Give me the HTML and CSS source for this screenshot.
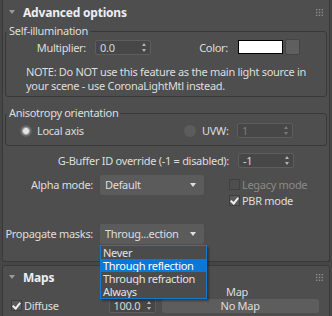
FILE: index.html
```html
<!DOCTYPE html>
<html lang="en">
<head>
  <meta charset="UTF-8">
  <title>Advanced options</title>
  <link rel="stylesheet" href="styles.css">
</head>
<body>
  <div class="screen">

    <!-- Advanced options rollout -->
    <div class="rollout adv">
      <div class="roll-head">
        <span class="tri"></span>
        <span class="roll-title">Advanced options</span>
        <svg class="grip" width="7" height="7" viewBox="0 0 7 7">
          <g fill="#8c8c8c">
            <rect x="0" y="0" width="1.4" height="1.4"/><rect x="2.8" y="0" width="1.4" height="1.4"/><rect x="5.6" y="0" width="1.4" height="1.4"/>
            <rect x="0" y="2.8" width="1.4" height="1.4"/><rect x="2.8" y="2.8" width="1.4" height="1.4"/><rect x="5.6" y="2.8" width="1.4" height="1.4"/>
            <rect x="0" y="5.6" width="1.4" height="1.4"/><rect x="2.8" y="5.6" width="1.4" height="1.4"/><rect x="5.6" y="5.6" width="1.4" height="1.4"/>
          </g>
        </svg>
      </div>

      <fieldset class="group">
        <legend>Self-illumination</legend>
        <div class="row mult-row">
          <span class="lbl lbl-mult">Multiplier:</span>
          <div class="spin w56"><span class="val">0.0</span><span class="arrows"></span></div>
          <span class="lbl lbl-color">Color:</span>
          <div class="swatch"></div>
          <div class="sw-btn"></div>
        </div>
        <p class="note">NOTE: Do NOT use this feature as the main light source in<br>your scene - use CoronaLightMtl instead.</p>
      </fieldset>

      <fieldset class="group aniso">
        <legend>Anisotropy orientation</legend>
        <div class="row aniso-row">
          <span class="radio on"></span>
          <span class="lbl radio-lbl">Local axis</span>
          <span class="radio off"></span>
          <span class="lbl lbl-uvw">UVW:</span>
          <div class="spin w56 disabled"><span class="val">1</span><span class="arrows"></span></div>
        </div>
      </fieldset>

      <div class="row gbuf-row">
        <span class="lbl lbl-gbuf">G-Buffer ID override (-1 = disabled):</span>
        <div class="spin w56"><span class="val">-1</span><span class="arrows"></span></div>
      </div>

      <div class="row alpha-row">
        <span class="lbl lbl-left">Alpha mode:</span>
        <div class="combo">Default<span class="combo-arrow"></span></div>
        <div class="checks">
          <div class="check disabled"><span class="box"></span>Legacy mode</div>
          <div class="check"><span class="box checked"></span>PBR mode</div>
        </div>
      </div>

      <div class="row prop-row">
        <span class="lbl lbl-left">Propagate masks:</span>
        <div class="combo">Throug...ection<span class="combo-arrow"></span></div>
      </div>

      <ul class="droplist">
        <li>Never</li>
        <li class="sel">Through reflection</li>
        <li>Through refraction</li>
        <li>Always</li>
      </ul>
    </div>

    <!-- Maps rollout -->
    <div class="rollout maps">
      <div class="roll-head short">
        <span class="tri"></span>
        <span class="roll-title">Maps</span>
        <svg class="grip" width="7" height="7" viewBox="0 0 7 7">
          <g fill="#8c8c8c">
            <rect x="0" y="0" width="1.4" height="1.4"/><rect x="2.8" y="0" width="1.4" height="1.4"/><rect x="5.6" y="0" width="1.4" height="1.4"/>
            <rect x="0" y="2.8" width="1.4" height="1.4"/><rect x="2.8" y="2.8" width="1.4" height="1.4"/><rect x="5.6" y="2.8" width="1.4" height="1.4"/>
            <rect x="0" y="5.6" width="1.4" height="1.4"/><rect x="2.8" y="5.6" width="1.4" height="1.4"/><rect x="5.6" y="5.6" width="1.4" height="1.4"/>
          </g>
        </svg>
      </div>
      <div class="map-head">Map</div>
      <div class="row map-row">
        <div class="check"><span class="box checked"></span>Diffuse</div>
        <div class="spin w47"><span class="val">100.0</span><span class="arrows"></span></div>
        <div class="map-btn">No Map</div>
      </div>
    </div>

  </div>
</body>
</html>
```

FILE: styles.css
```css
body {
  margin: 0;
  background: #464646;
  font-family: "Noto Sans", sans-serif;
  font-size: 11px;
  letter-spacing: -0.3px;
  color: #dedede;
}

.screen {
  width: 332px;
  height: 316px;
  overflow: hidden;
  position: relative;
}

.rollout {
  margin: 0 2px 0 2px;
  background: #4e4e4e;
  border: 1px solid #393939;
  border-radius: 3px;
}

.rollout.adv {
  border-top: none;
  border-radius: 0 0 3px 3px;
  height: 262px;
  box-sizing: border-box;
  position: relative;
}

.rollout.maps {
  margin-top: 3px;
  height: 60px;
}

.roll-head {
  height: 24px;
  display: flex;
  align-items: center;
  padding-left: 6px;
}

.roll-head.short {
  height: 22px;
}

.tri {
  width: 0;
  height: 0;
  border-left: 3px solid transparent;
  border-right: 3px solid transparent;
  border-top: 4px solid #9a9a9a;
  margin-right: 8px;
}

.roll-title {
  font-weight: bold;
  font-size: 12px;
  letter-spacing: -0.2px;
  color: #eceef6;
}

.grip {
  margin-left: auto;
  margin-right: 6px;
}

/* group boxes */
.group {
  margin: 0 2px;
  padding: 0 0 3px;
  border: 1px solid #383838;
  border-radius: 3px;
  min-width: 0;
}

.group legend {
  padding: 0 2px;
  margin-left: 1px;
  line-height: 14px;
}

.group.aniso {
  margin-top: 9px;
  padding-bottom: 7px;
}

.row {
  display: flex;
  align-items: center;
}

.lbl {
  white-space: nowrap;
}

.mult-row {
  margin-top: 1px;
  height: 16px;
}

.lbl-mult {
  width: 80px;
  text-align: right;
  margin-right: 9px;
}

.lbl-color {
  width: 77px;
  text-align: right;
  margin-right: 10px;
}

.swatch {
  width: 43px;
  height: 12px;
  background: #fff;
  border: 1px solid #000;
}

.sw-btn {
  width: 13px;
  height: 14px;
  margin-left: 2px;
  background: #5f5f5f;
  border: 1px solid #444;
  border-radius: 2px;
}

.note {
  margin: 10px 0 0 20px;
  line-height: 14px;
  white-space: nowrap;
}

/* spinners */
.spin {
  height: 15px;
  box-sizing: border-box;
  background: #474747;
  border: 1px solid #5d5d5d;
  border-radius: 2px;
  display: flex;
  align-items: center;
  padding-left: 4px;
  position: relative;
}

.w56 { width: 56px; }
.w47 { width: 47px; }

.spin .val {
  color: #d8d8d8;
}

.spin .arrows {
  position: absolute;
  right: 3px;
  top: 2px;
  width: 5px;
  height: 9px;
}

.spin .arrows::before,
.spin .arrows::after {
  content: "";
  position: absolute;
  left: 0;
  border-left: 2.5px solid transparent;
  border-right: 2.5px solid transparent;
}

.spin .arrows::before {
  top: 0;
  border-bottom: 3px solid #b4b4b4;
}

.spin .arrows::after {
  bottom: 0;
  border-top: 3px solid #b4b4b4;
}

.spin.disabled .val {
  color: #7c7c7c;
}

.spin.disabled .arrows::before { border-bottom-color: #7a7a7a; }
.spin.disabled .arrows::after { border-top-color: #7a7a7a; }

/* radios */
.aniso-row {
  margin-top: 3px;
  height: 15px;
}

.radio {
  width: 12px;
  height: 12px;
  flex: none;
  border-radius: 50%;
  background: #5c5c5c;
  box-sizing: border-box;
}

.radio.on {
  margin-left: 14px;
  background: radial-gradient(circle, #e4e4e4 0 2.5px, #bdbdbd 3px, #6a6a6a 4.5px, #5e5e5e 6px);
}

.radio.off {
  margin-left: 101px;
}

.radio-lbl {
  margin-left: 5px;
  width: 46px;
}

.lbl-uvw {
  margin-left: 6px;
  margin-right: 9px;
  width: 26px;
}

.gbuf-row {
  margin-top: 6px;
  height: 16px;
}

.lbl-gbuf {
  width: 226px;
  text-align: right;
  margin-right: 9px;
}

/* combos */
.alpha-row {
  margin-top: 7px;
  align-items: flex-start;
}

.lbl-left {
  width: 90px;
  text-align: right;
  margin-right: 7px;
  line-height: 20px;
}

.combo {
  width: 104px;
  height: 20px;
  box-sizing: border-box;
  background: #5b5b5b;
  border-radius: 2px;
  padding-left: 5px;
  line-height: 20px;
  position: relative;
}

.combo-arrow {
  position: absolute;
  right: 8px;
  top: 8px;
  border-left: 3px solid transparent;
  border-right: 3px solid transparent;
  border-top: 4px solid #e0e0e0;
}

.checks {
  margin-left: 25px;
  padding-top: 1px;
}

.check {
  display: flex;
  align-items: center;
  height: 16px;
  white-space: nowrap;
}

.check .box {
  width: 11px;
  height: 11px;
  box-sizing: border-box;
  border: 1px solid #3e3e3e;
  background: #595959;
  margin-right: 2px;
  position: relative;
}

.check.disabled {
  color: #8a8a8a;
}

.check.disabled .box {
  background: #4e4e4e;
  border-color: #404040;
}

.check .box.checked::after {
  content: "";
  position: absolute;
  left: 2px;
  top: 0;
  width: 3px;
  height: 6px;
  border: solid #f0f0f0;
  border-width: 0 2px 2px 0;
  transform: rotate(40deg);
}

.prop-row {
  margin-top: 16px;
}

/* open dropdown list */
.droplist {
  position: absolute;
  left: 97px;
  top: 245px;
  width: 107px;
  margin: 0;
  padding: 0;
  list-style: none;
  background: #4b4b4b;
  border: 1px solid #1479d4;
  box-sizing: border-box;
  box-shadow: 2px 2px 2px rgba(0, 0, 0, 0.35);
  z-index: 2;
}

.droplist li {
  height: 13px;
  line-height: 13px;
  padding-left: 2px;
  color: #e4e4e4;
  overflow: hidden;
}

.droplist li.sel {
  background: #0a78d7;
  color: #fff;
}

/* maps */
.map-head {
  margin: -3px 0 0 223px;
  line-height: 13px;
}

.map-row {
  margin-top: 0;
  height: 15px;
}

.map-row .check {
  margin-left: 8px;
}

.map-row .spin {
  margin-left: 50px;
}

.map-btn {
  width: 157px;
  height: 14px;
  margin-left: 6px;
  background: #5d5d5d;
  border-radius: 3px;
  text-align: center;
  line-height: 14px;
}
```
